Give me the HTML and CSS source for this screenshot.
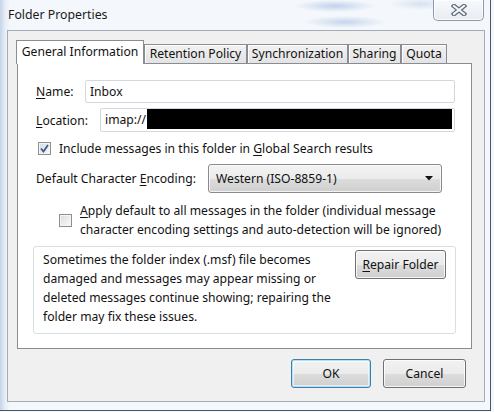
FILE: index.html
```html
<!DOCTYPE html>
<html>
<head>
<meta charset="utf-8">
<link rel="stylesheet" href="styles.css">
</head>
<body>
<div class="window">
  <div class="titlebar">
    <span class="title">Folder Properties</span>
    <div class="close">
      <svg width="16" height="12" viewBox="0 0 16 12">
        <path d="M3 2 L13 10 M13 2 L3 10" stroke="#5f6a77" stroke-width="4.6" stroke-linecap="square" fill="none"/>
        <path d="M3 2 L13 10 M13 2 L3 10" stroke="#f4f6f9" stroke-width="2.2" stroke-linecap="square" fill="none"/>
      </svg>
    </div>
  </div>
  <div class="client">
    <div class="tabs">
      <div class="tab selected t-general">General Information</div>
      <div class="tab t-retention">Retention Policy</div>
      <div class="tab t-sync">Synchronization</div>
      <div class="tab t-sharing">Sharing</div>
      <div class="tab t-quota">Quota</div>
    </div>
    <div class="panel">
      <div class="row row-name">
        <span class="lbl lbl-name"><u>N</u>ame:</span>
        <div class="input">Inbox</div>
      </div>
      <div class="row row-loc">
        <span class="lbl lbl-loc"><u>L</u>ocation:</span>
        <div class="input input-loc"><span>imap://</span><span class="redact"></span></div>
      </div>
      <div class="row row-check">
        <span class="check checked">
          <svg width="11" height="11" viewBox="0 0 11 11"><path d="M2 5.5 L4.5 8.5 L9 2" stroke="#3e5a86" stroke-width="1.8" fill="none"/></svg>
        </span>
        <span class="check-text">Include messages in this folder in <u>G</u>lobal Search results</span>
      </div>
      <div class="row row-enc">
        <span class="lbl lbl-enc">Default Character <u>E</u>ncoding:</span>
        <div class="select">
          <span>Western (ISO-8859-1)</span>
          <svg width="8" height="5" viewBox="0 0 8 5"><path d="M0 0 H8 L4 4.5 Z" fill="#111"/></svg>
        </div>
      </div>
      <div class="row row-apply">
        <span class="check"></span>
        <span class="check-text multi"><u>A</u>pply default to all messages in the folder (individual message<br>character encoding settings and auto-detection will be ignored)</span>
      </div>
      <div class="group">
        <p class="group-text">Sometimes the folder index (.msf) file becomes<br>damaged and messages may appear missing or<br>deleted messages continue showing; repairing the<br>folder may fix these issues.</p>
        <button class="btn btn-repair"><u>R</u>epair Folder</button>
      </div>
    </div>
    <div class="buttons">
      <button class="btn btn-ok default">OK</button>
      <button class="btn btn-cancel">Cancel</button>
    </div>
  </div>
</div>
</body>
</html>
```

FILE: styles.css
```css
* { box-sizing: border-box; }

html, body {
  margin: 0;
  padding: 0;
}

body {
  width: 494px;
  height: 412px;
  overflow: hidden;
  background: #f3f6fa;
  font-family: "Noto Sans", "Open Sans", sans-serif;
  font-size: 12.15px;
  color: #111;
}

u { text-decoration: underline; text-underline-offset: 2px; }

.window {
  width: 491px;
  height: 411px;
  border-right: 1px solid #4c545e;
  border-bottom: 1px solid #4c545e;
  background:
    radial-gradient(ellipse 40px 6px at 335px 6px, rgba(150,180,220,0.55), rgba(150,180,220,0) 100%),
    radial-gradient(ellipse 40px 6px at 345px 22px, rgba(150,180,220,0.5), rgba(150,180,220,0) 100%),
    radial-gradient(ellipse 30px 6px at 420px 4px, rgba(170,195,225,0.4), rgba(170,195,225,0) 100%),
    linear-gradient(to right, #c3d4ea 0px, #e6edf6 5px, #f4f7fb 10px),
    #f4f7fb;
  display: flex;
  flex-direction: column;
}

.titlebar {
  height: 30px;
  display: flex;
  align-items: flex-start;
  padding: 0 6px 0 8px;
}

.title {
  margin-top: 6px;
  font-size: 12.3px;
  line-height: 17px;
  color: #1a1a1a;
}

.close {
  margin-left: auto;
  width: 51px;
  height: 21px;
  border: 1px solid #8e9aab;
  border-top: none;
  border-radius: 0 0 5px 5px;
  background: linear-gradient(#f7f9fc, #e7ecf2);
  box-shadow: inset 0 0 0 1px rgba(255,255,255,0.8);
  display: flex;
  align-items: center;
  justify-content: center;
}

.client {
  margin-left: 7px;
  width: 478px;
  height: 372px;
  border: 1px solid #a3acb6;
  background: #f0f0f0;
  padding: 9px 0 0 9px;
  display: flex;
  flex-direction: column;
}

.tabs {
  display: flex;
  align-items: flex-end;
  margin-left: -1px;
  height: 23px;
  position: relative;
  z-index: 1;
}

.tab {
  height: 19px;
  border: 1px solid #898c95;
  border-bottom: none;
  background: linear-gradient(#f2f2f2, #e3e3e3);
  box-shadow: inset 1px 1px 0 #fff;
  line-height: 17px;
  text-align: center;
  white-space: nowrap;
  overflow: hidden;
}

.tab.selected {
  height: 24px;
  margin-bottom: -1px;
  background: #fff;
  box-shadow: none;
  padding-top: 2px;
}

.t-general { width: 128px; }
.t-retention { width: 103px; }
.t-sync { width: 101px; }
.t-sharing { width: 53px; }
.t-quota { width: 46px; }

.panel {
  width: 455px;
  height: 286px;
  border: 1px solid #898c95;
  background: #fff;
  padding: 16px 16px 0 18px;
  display: flex;
  flex-direction: column;
}

.row {
  display: flex;
  align-items: center;
}

.lbl { white-space: nowrap; }
.lbl-name { width: 49px; }
.lbl-loc { width: 64px; }
.lbl-enc { width: 172px; }

.input {
  flex: 1;
  height: 23px;
  border: 1px solid #d3d8de;
  border-radius: 2px;
  padding: 0 4px;
  display: flex;
  align-items: center;
  line-height: 17px;
}

.row-loc { margin-top: 5px; }
.input-loc {
  height: 24px;
  align-items: flex-start;
  padding: 0 2px 0 4px;
}
.input-loc span:first-child { margin-top: 2px; }
.redact {
  flex: 1;
  height: 20px;
  background: #000;
  margin-left: 1px;
}

.check {
  width: 13px;
  height: 13px;
  border: 1px solid #8e8f8f;
  background: linear-gradient(135deg, #dcdcdc, #fbfbfb);
  box-shadow: inset 0 0 0 1px #f4f4f4;
  display: flex;
  align-items: center;
  justify-content: center;
  flex-shrink: 0;
}
.check.checked {
  background: linear-gradient(135deg, #d3dbe6, #f8fafc);
}

.check-text {
  line-height: 19px;
  white-space: nowrap;
}

.row-check {
  margin-top: 7px;
  padding-left: 2px;
}
.row-check .check-text { margin-left: 8px; }

.row-enc { margin-top: 6px; }
.select {
  width: 234px;
  height: 29px;
  border: 1px solid #8a8a8a;
  border-radius: 3px;
  background: linear-gradient(#f3f3f3 0%, #ebebeb 50%, #dddddd 51%, #cfcfcf 100%);
  box-shadow: inset 0 0 0 1px rgba(255,255,255,0.75);
  display: flex;
  align-items: center;
  padding: 0 8px 0 7px;
  justify-content: space-between;
}

.row-apply {
  margin-top: 8px;
  padding-left: 23px;
}
.row-apply .check-text { margin-left: 8px; }

.group {
  margin: 7px -1px 0 -3px;
  height: 88px;
  border: 1px solid #d5dfe5;
  border-radius: 3px;
  padding: 3px 9px 0 9px;
  display: flex;
  justify-content: space-between;
  align-items: flex-start;
}

.group-text {
  margin: 0;
  line-height: 19px;
  white-space: nowrap;
}

.btn {
  font-family: inherit;
  font-size: 12.15px;
  color: #111;
  border: 1px solid #707070;
  border-radius: 3px;
  background: linear-gradient(#f2f2f2 0%, #ebebeb 50%, #dddddd 51%, #cfcfcf 100%);
  box-shadow: inset 0 0 0 1px rgba(255,255,255,0.8);
  padding: 0;
  height: 29px;
  line-height: 17px;
}

.btn-repair {
  width: 91px;
  margin-top: 0;
  flex-shrink: 0;
}

.buttons {
  display: flex;
  justify-content: flex-end;
  gap: 12px;
  margin-top: 10px;
  padding-right: 18px;
}

.btn-ok { width: 80px; }
.btn-cancel { width: 83px; }

.btn.default {
  border-color: #3c7fb1;
  box-shadow: inset 0 0 0 1px #b4dff5, inset 0 0 0 2px rgba(255,255,255,0.6);
}
```
